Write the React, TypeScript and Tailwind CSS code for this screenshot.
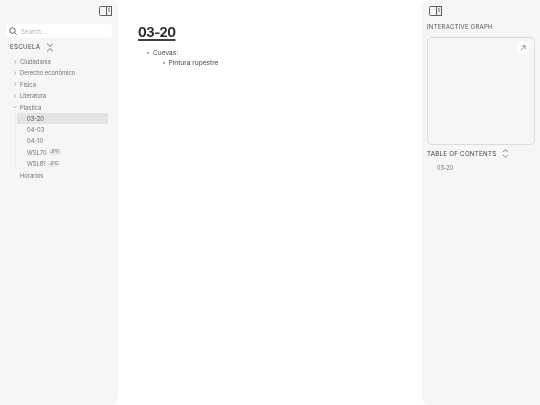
import React from "react";

function PanelIcon({ className }: { className?: string }) {
  return (
    <svg viewBox="0 0 13 10" width="13" height="10" fill="none" className={className}>
      <rect x="0.5" y="0.5" width="12" height="9" rx="1" stroke="#5f5f66" strokeWidth="1" />
      <rect x="7.5" y="0.5" width="5" height="9" fill="#ececec" stroke="#5f5f66" strokeWidth="1" />
      <path d="M9 3h2M9 5h2" stroke="#5f5f66" strokeWidth="0.8" />
    </svg>
  );
}

function Chevron({ open }: { open?: boolean }) {
  return (
    <svg viewBox="0 0 4 4" width="4" height="4" fill="none" className="shrink-0">
      <path d={open ? "M0.3 1 2 3 3.7 1" : "M1 0.3 3 2 1 3.7"} stroke="#a1a1aa" strokeWidth="0.6" />
    </svg>
  );
}

function Folder({ label, open }: { label: string; open?: boolean }) {
  return (
    <div className="flex h-[11.4px] items-center gap-[3px] pl-[8px]">
      <Chevron open={open} />
      <span>{label}</span>
    </div>
  );
}

function Badge() {
  return <span className="rounded-[2px] bg-[#e9e9e9] px-[2px] text-[4.2px] leading-[6px] tracking-[0.2px]">JPG</span>;
}

function Bullet({ children }: { children: React.ReactNode }) {
  return (
    <div className="flex items-center gap-[4px]">
      <span className="h-[2px] w-[2px] shrink-0 rounded-full bg-[#8a8a90]" />
      <span>{children}</span>
    </div>
  );
}

export default function App() {
  return (
    <div className="flex h-[405px] w-[540px] overflow-hidden bg-white font-['Inter',sans-serif] text-[#52525b] blur-[0.3px]">
      <aside className="flex w-[118px] shrink-0 flex-col rounded-r-[8px] bg-[#f6f6f6] pl-[6px] pr-[6px]">
        <div className="flex h-[24px] items-start justify-end pt-[6px]">
          <PanelIcon />
        </div>
        <div className="flex h-[14px] w-[106px] items-center gap-[4px] rounded-[2px] bg-white pl-[3px]">
          <svg viewBox="0 0 8 8" width="8" height="8" fill="none">
            <circle cx="3.5" cy="3.5" r="2.8" stroke="#3f3f46" strokeWidth="0.8" />
            <path d="M5.6 5.6 7.6 7.6" stroke="#3f3f46" strokeWidth="0.8" />
          </svg>
          <span className="text-[6px] text-[#b4b4b8]">Search...</span>
        </div>
        <div className="mt-[2px] flex h-[14px] items-center gap-[6px] pl-[4px]">
          <span className="text-[6.2px] tracking-[0.3px] text-[#3f3f46]">ESCUELA</span>
          <svg viewBox="0 0 8 9" width="8" height="9" fill="none">
            <path d="M1.2 0.8 4 3.4 6.8 0.8M1.2 8.2 4 5.6 6.8 8.2" stroke="#3f3f46" strokeWidth="0.7" />
          </svg>
        </div>
        <div className="-ml-[1px] mt-[2px] flex flex-col text-[5.8px] leading-[11.4px] text-[#71717a]">
          <Folder label="Ciudadanía" />
          <Folder label="Derecho económico" />
          <Folder label="Física" />
          <Folder label="Literatura" />
          <Folder label="Plastica" open />
          <div className="ml-[10px] border-l border-[#ececec] pl-[1px]">
            <div className="flex h-[11px] w-[91px] items-center rounded-[1px] bg-[#e4e4e4] pl-[10px] text-[#52525b]">03-20</div>
            <div className="flex h-[11.4px] items-center pl-[10px]">04-03</div>
            <div className="flex h-[11.4px] items-center pl-[10px]">04-10</div>
            <div className="flex h-[11.4px] items-center gap-[2px] pl-[10px]">WSL70 <Badge /></div>
            <div className="flex h-[11.4px] items-center gap-[2px] pl-[10px]">WSL81 <Badge /></div>
          </div>
          <div className="flex h-[11.4px] items-center pl-[15px]">Horarios</div>
        </div>
      </aside>

      <main className="min-w-0 flex-1 pl-[20px] pt-[24px] text-[#3f3f46]">
        <h1 className="w-fit text-[13px] font-bold leading-[16px] tracking-[-0.5px] text-[#27272a] underline decoration-[#3f3f46] decoration-[2px] underline-offset-[1.5px]">03-20</h1>
        <div className="mt-[8px] flex flex-col pl-[9px] text-[6.6px] leading-[10px]">
          <Bullet>Cuevas:</Bullet>
          <div className="pl-[15.5px]">
            <Bullet>Pintura rupestre</Bullet>
          </div>
        </div>
      </main>

      <aside className="flex w-[118px] shrink-0 flex-col rounded-l-[8px] bg-[#f6f6f6] pl-[5px] pr-[5px]">
        <div className="flex h-[22px] items-start pl-[2px] pt-[6px]">
          <PanelIcon />
        </div>
        <div className="mt-[1px] text-[6px] leading-[8px] tracking-[0.25px] text-[#52525b]">INTERACTIVE GRAPH</div>
        <div className="relative mt-[6px] h-[108px] w-[108px] rounded-[5px] border border-[#dcdcdc]">
          <div className="absolute right-[5px] top-[3px] flex h-[13px] w-[13px] items-center justify-center rounded-full bg-white">
            <svg viewBox="0 0 6 6" width="6" height="6" fill="none">
              <path d="M0.7 5.3 5.2 0.8M1.5 0.8H5.2V4.5" stroke="#52525b" strokeWidth="0.6" />
            </svg>
          </div>
        </div>
        <div className="mt-[3px] flex h-[11px] items-center gap-[6px]">
          <span className="text-[6.2px] tracking-[0.25px] text-[#3f3f46]">TABLE OF CONTENTS</span>
          <svg viewBox="0 0 7 9" width="7" height="9" fill="none">
            <path d="M1 3 3.5 0.8 6 3M1 6 3.5 8.2 6 6" stroke="#3f3f46" strokeWidth="0.6" />
          </svg>
        </div>
        <div className="mt-[5px] pl-[10px] text-[5.5px] leading-[8px] text-[#71717a]">03-20</div>
      </aside>
    </div>
  );
}
